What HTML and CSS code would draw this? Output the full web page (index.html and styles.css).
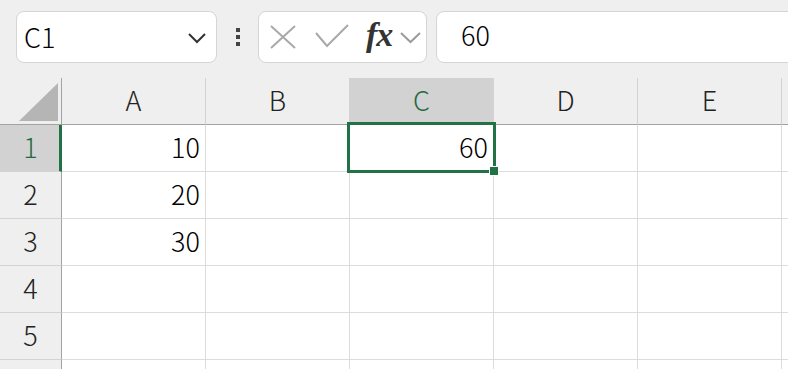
FILE: index.html
```html
<!DOCTYPE html>
<html lang="ja">
<head>
  <meta charset="UTF-8">
  <title>Sheet1</title>
  <link rel="stylesheet" href="styles.css">
</head>
<body>
  <div class="toolbar">
    <div class="namebox">
      <span class="name">C1</span>
      <svg class="chev" width="18" height="12" viewBox="0 0 18 12"><polyline points="1,2 9,10 17,2" fill="none" stroke="#333" stroke-width="2"/></svg>
    </div>
    <div class="dots"><i></i><i></i><i></i></div>
    <div class="fxbox">
      <svg class="ico-x" width="26" height="24" viewBox="0 0 26 24"><path d="M1 1 L25 23 M25 1 L1 23" stroke="#a9a9a9" stroke-width="2" fill="none"/></svg>
      <svg class="ico-ok" width="34" height="25" viewBox="0 0 34 25"><polyline points="1,9 12,22 33,1" fill="none" stroke="#a9a9a9" stroke-width="2"/></svg>
      <span class="fx">fx</span>
      <svg class="ico-dd" width="21" height="12" viewBox="0 0 21 12"><polyline points="1,1 10.5,10 20,1" fill="none" stroke="#9c9c9c" stroke-width="2"/></svg>
    </div>
    <div class="formula">60</div>
  </div>

  <div class="sheet">
    <div class="grid">
      <div class="corner"><svg width="61" height="46" viewBox="0 0 61 46"><polygon points="19,43 58,5 58,43" fill="#b5b5b5"/></svg></div>
      <div class="colhead">A</div>
      <div class="colhead">B</div>
      <div class="colhead sel">C</div>
      <div class="colhead">D</div>
      <div class="colhead">E</div>
      <div class="colhead last"></div>

      <div class="rowhead sel">1</div>
      <div class="cell">10</div><div class="cell"></div><div class="cell">60</div><div class="cell"></div><div class="cell"></div><div class="cell last"></div>
      <div class="rowhead">2</div>
      <div class="cell">20</div><div class="cell"></div><div class="cell"></div><div class="cell"></div><div class="cell"></div><div class="cell last"></div>
      <div class="rowhead">3</div>
      <div class="cell">30</div><div class="cell"></div><div class="cell"></div><div class="cell"></div><div class="cell"></div><div class="cell last"></div>
      <div class="rowhead">4</div>
      <div class="cell"></div><div class="cell"></div><div class="cell"></div><div class="cell"></div><div class="cell"></div><div class="cell last"></div>
      <div class="rowhead">5</div>
      <div class="cell"></div><div class="cell"></div><div class="cell"></div><div class="cell"></div><div class="cell"></div><div class="cell last"></div>
      <div class="rowhead"></div>
      <div class="cell"></div><div class="cell"></div><div class="cell"></div><div class="cell"></div><div class="cell"></div><div class="cell last"></div>
    </div>
    <div class="selection"><span class="handle"></span></div>
  </div>
</body>
</html>
```

FILE: styles.css
```css
body {
  margin: 0;
  background: #efefef;
  font-family: "Noto Sans CJK JP", "Noto Sans", sans-serif;
  font-weight: 300;
  color: #000;
  overflow: hidden;
}

/* formula bar */
.toolbar {
  display: flex;
  align-items: flex-start;
  height: 78px;
  padding: 11px 0 0 16px;
  box-sizing: border-box;
}
.namebox {
  display: flex;
  align-items: center;
  width: 201px;
  height: 52px;
  box-sizing: border-box;
  background: #fff;
  border: 1px solid #d5d5d5;
  border-radius: 8px;
  padding: 0 10px 0 7px;
}
.name {
  font-size: 27px;
  flex: 1;
  margin-top: -2px;
}
.chev {
  margin-top: 2px;
}
.dots {
  display: flex;
  flex-direction: column;
  gap: 3px;
  width: 4px;
  margin: 17px 18px 0 19px;
}
.dots i {
  display: block;
  width: 4px;
  height: 4px;
  background: #444;
}
.fxbox {
  display: flex;
  align-items: center;
  width: 169px;
  height: 52px;
  box-sizing: border-box;
  background: #fff;
  border: 1px solid #d5d5d5;
  border-radius: 8px;
  padding-left: 11px;
}
.ico-x { margin-right: 19px; }
.ico-ok { margin-right: 17px; margin-top: -2px; }
.fx {
  font-family: "Liberation Serif", serif;
  font-style: italic;
  font-weight: bold;
  font-size: 34px;
  color: #333;
  margin-right: 8px;
  margin-top: -4px;
  letter-spacing: -1px;
}
.ico-dd { margin-top: 2px; }
.formula {
  flex: 1;
  height: 52px;
  box-sizing: border-box;
  margin: 0 -12px 0 9px;
  background: #fff;
  border: 1px solid #d5d5d5;
  border-radius: 8px;
  padding-left: 24px;
  font-size: 27px;
  line-height: 46px;
}

/* grid */
.sheet {
  position: relative;
}
.grid {
  display: grid;
  grid-template-columns: 62px repeat(5, 144px) 40px;
  grid-auto-rows: 47px;
}
.grid > div {
  box-sizing: border-box;
  display: flex;
  align-items: center;
  font-size: 27px;
  padding-bottom: 4px;
}
.corner {
  background: #efefef;
  border-right: 1px solid #a3a3a3;
  border-bottom: 1px solid #a3a3a3;
}
.grid > .corner { padding: 0; }
.corner svg { display: block; }
.colhead {
  justify-content: center;
  background: #efefef;
  color: #222;
  border-right: 1px solid #d3d3d3;
  border-bottom: 1px solid #a3a3a3;
}
.colhead.sel {
  background: #d2d2d2;
  color: #1f6b3f;
}
.rowhead {
  justify-content: center;
  background: #efefef;
  color: #222;
  border-right: 1px solid #a3a3a3;
  border-bottom: 1px solid #d3d3d3;
}
.rowhead.sel {
  background: #d2d2d2;
  color: #1f6b3f;
  border-right: 3px solid #217346;
  padding-left: 2px;
}
.cell {
  justify-content: flex-end;
  padding-right: 5px;
  background: #fff;
  border-right: 1px solid #dcdcdc;
  border-bottom: 1px solid #dcdcdc;
}

.selection {
  position: absolute;
  left: 347px;
  top: 44px;
  width: 149px;
  height: 51px;
  box-sizing: border-box;
  border: 3px solid #217346;
}
.handle {
  position: absolute;
  right: -6px;
  bottom: -6px;
  width: 8px;
  height: 8px;
  background: #217346;
  border: 1px solid #fff;
}
```
